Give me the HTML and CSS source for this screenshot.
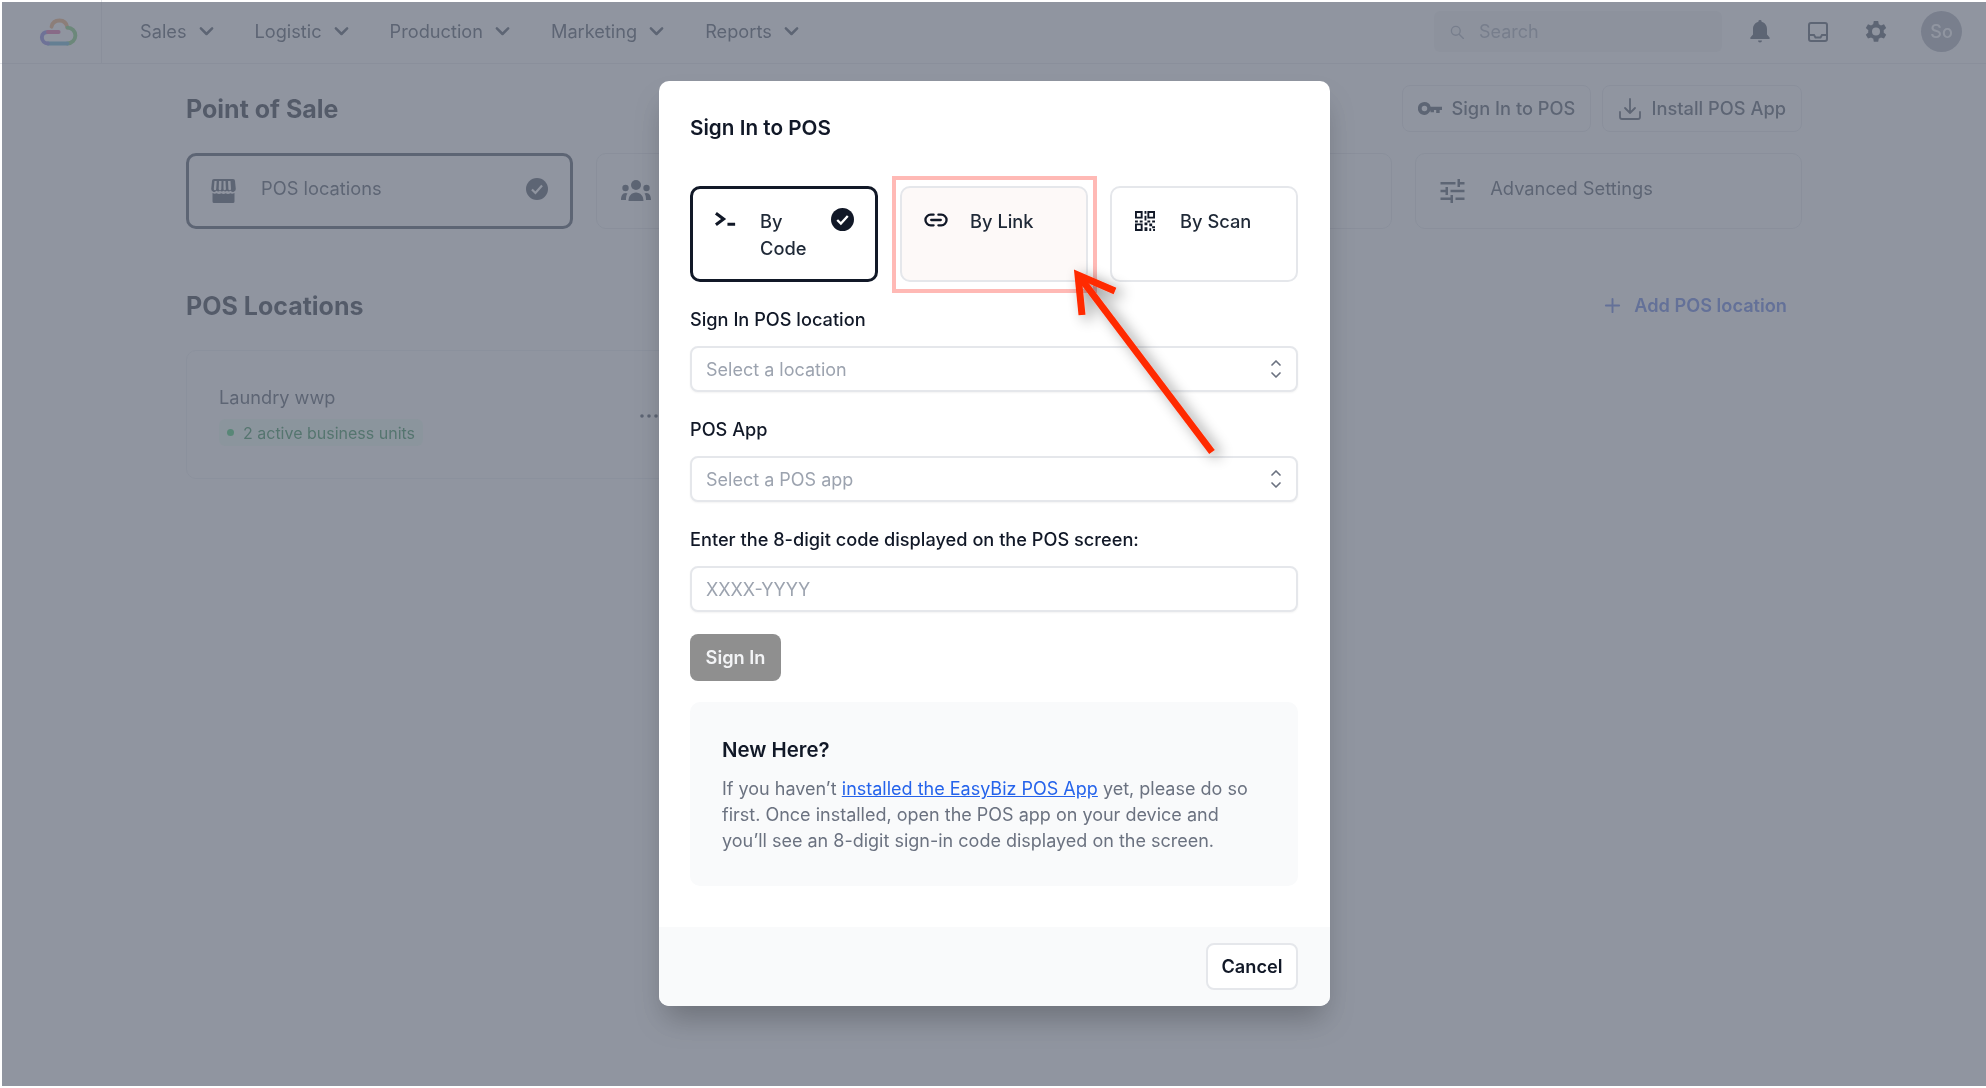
FILE: index.html
```html
<!DOCTYPE html>
<html lang="en">
<head>
  <meta charset="UTF-8">
  <meta name="viewport" content="width=device-width, initial-scale=1.0">
  <title>Point of Sale</title>
  <link rel="stylesheet" href="styles.css">
</head>
<body>
  <div class="page">
    <nav class="topbar">
      <div class="brand">
        <svg class="logo" viewBox="0 0 46 34" fill="none" stroke-width="4.4" stroke-linecap="round">
          <path d="M14 11 C15 6 19 4 23 4 C28 4 31 7 32 12" stroke="#efa463"/>
          <path d="M32 12 C37 12 41 16 41 21 C41 26 37 30 32 30" stroke="#72c96a"/>
          <path d="M32 30 H10" stroke="#4fa7c9"/>
          <path d="M10 30 C6 30 3 27 3 23 C3 19 6 17 10 17" stroke="#7a74dc"/>
          <path d="M10 17 H22" stroke="#e0569a"/>
        </svg>
      </div>
      <ul class="menu">
        <li>Sales <svg class="chev" viewBox="0 0 20 20"><path d="M5.5 7.5 10 12l4.5-4.5"/></svg></li>
        <li>Logistic <svg class="chev" viewBox="0 0 20 20"><path d="M5.5 7.5 10 12l4.5-4.5"/></svg></li>
        <li>Production <svg class="chev" viewBox="0 0 20 20"><path d="M5.5 7.5 10 12l4.5-4.5"/></svg></li>
        <li>Marketing <svg class="chev" viewBox="0 0 20 20"><path d="M5.5 7.5 10 12l4.5-4.5"/></svg></li>
        <li>Reports <svg class="chev" viewBox="0 0 20 20"><path d="M5.5 7.5 10 12l4.5-4.5"/></svg></li>
      </ul>
      <div class="search">
        <svg viewBox="0 0 20 20" fill="none" stroke="currentColor" stroke-width="1.7" stroke-linecap="round"><circle cx="8.5" cy="8.5" r="5.5"/><path d="m13 13 5 5"/></svg>
        <span>Search</span>
      </div>
      <div class="tools">
        <svg class="bell" viewBox="0 0 20 24" fill="currentColor"><path d="M10 0a1.6 1.6 0 0 1 1.6 1.8C15 2.6 17 5.6 17 9v5.6l2.6 3V19H.4v-1.4l2.6-3V9c0-3.4 2-6.4 5.4-7.2A1.6 1.6 0 0 1 10 0ZM8 20.4h4a2 2 0 0 1-4 0Z"/></svg>
        <svg class="inbox" viewBox="0 0 20 20" fill="none" stroke="currentColor" stroke-width="2"><rect x="1" y="1" width="18" height="18" rx="2"/><path d="M1 13h5l1.5 2.5h5L14 13h5"/></svg>
        <svg class="gear" viewBox="0 0 24 24" fill="currentColor"><path fill-rule="evenodd" d="M14.2 1h-4.400l-.6 3.200a8 8 0 0 0-2.100 1.200L4 4.300 1.800 8.100l2.500 2.100a8 8 0 0 0 0 2.400l-2.500 2.100L4 18.500l3.100-1.100a8 8 0 0 0 2.100 1.200l.6 3.200h4.400l.6-3.200a8 8 0 0 0 2.100-1.200l3.100 1.100 2.200-3.800-2.500-2.100a8 8 0 0 0 0-2.400l2.500-2.100L20 4.300l-3.100 1.100a8 8 0 0 0-2.100-1.200L14.200 1ZM12 15.400a4 4 0 1 0 0-8 4 4 0 0 0 0 8Z"/></svg>
        <div class="avatar">So</div>
      </div>
    </nav>

    <main class="content">
      <header class="page-head">
        <h1>Point of Sale</h1>
        <div class="head-actions">
          <button class="btn-outline">
            <svg class="key" viewBox="0 0 26 14" fill="currentColor"><path fill-rule="evenodd" d="M7 0a7 7 0 0 1 6.700 5H26v3.500h-2.500V12h-3.800V8.500h-2.400V11h-3.800V9A7 7 0 1 1 7 0Zm0 4a3 3 0 1 0 0 6 3 3 0 0 0 0-6Z"/></svg>
            Sign In to POS
          </button>
          <button class="btn-outline">
            <svg class="download" viewBox="0 0 24 24" fill="none" stroke="currentColor" stroke-width="1.800" stroke-linecap="round" stroke-linejoin="round"><path d="M2 15v5a2 2 0 0 0 2 2h16a2 2 0 0 0 2-2v-5M12 2v14m-5-5 5 5 5-5"/></svg>
            Install POS App
          </button>
        </div>
      </header>

      <section class="tabs">
        <div class="tab tab-active">
          <svg class="tab-icon" viewBox="0 0 25 24" fill="currentColor"><path fill-rule="evenodd" d="M3 0h19a2 2 0 0 1 2 2l.8 8a3 3 0 0 1-5.300 1.800 3 3 0 0 1-3.500 0 3 3 0 0 1-3.500 0 3 3 0 0 1-3.500 0 3 3 0 0 1-3.500 0 3 3 0 0 1-5.300-1.800L1 2a2 2 0 0 1 2-2Zm.5 2-.7 8a1.200 1.200 0 0 0 2.400 0l.5-8Zm4.500 0-.3 8a1.300 1.300 0 0 0 2.600 0l.2-8Zm4.500 0v8a1.200 1.200 0 0 0 2.400 0l-.4-8Zm4.500 0 .4 8a1.300 1.300 0 0 0 2.600 0L19.500 2Z"/><path d="M1.500 14c1.500 1 3 1 4.200.3 1.400 1 3.200 1 4.600 0 1.400 1 3 1 4.400 0 1.400 1 3.200 1 4.600 0 1.200.7 2.700.7 4.200-.3v8.500a1.500 1.500 0 0 1-1.500 1.500H3A1.500 1.500 0 0 1 1.500 22.500Z"/></svg>
          <span class="tab-label">POS locations</span>
          <svg class="tab-check" viewBox="0 0 24 24"><circle cx="12" cy="12" r="12" fill="currentColor"/><path d="m6.500 12.500 3.800 3.800 7.200-8" fill="none" stroke="#fff" stroke-width="2.400"/></svg>
        </div>
        <div class="tab">
          <svg class="tab-icon people" viewBox="0 0 30 22" fill="currentColor"><circle cx="15" cy="5" r="5"/><circle cx="4.500" cy="8" r="3.200"/><circle cx="25.500" cy="8" r="3.200"/><path d="M7.500 21c0-5 3-8.500 7.500-8.500s7.500 3.500 7.500 8.500ZM0 20c0-4 1.500-7 4.500-7 .8 0 1.500.2 2 .5C5 15.500 5 18 5 20ZM30 20c0-4-1.500-7-4.500-7-.8 0-1.500.2-2 .5 1.500 2 1.500 4.500 1.500 6.500Z"/></svg>
        </div>
        <div class="tab"></div>
        <div class="tab">
          <svg class="tab-icon sliders" viewBox="0 0 24 24" fill="currentColor"><path d="M0 3h15v2.500H0zM17 0h2.500v3H24v2.500h-4.500V8H17zM0 10.700h5V8h2.500v8H5v-2.800H0zM10 10.700h14v2.500H10zM0 18.500h10V16h2.500v8H10v-3H0zM15 18.500h9V21h-9z"/></svg>
          <span class="tab-label">Advanced Settings</span>
        </div>
      </section>

      <section class="locations">
        <div class="section-head">
          <h2>POS Locations</h2>
          <a class="add-link">
            <svg viewBox="0 0 20 20" fill="none" stroke="currentColor" stroke-width="2" stroke-linecap="round"><path d="M10 3v14M3 10h14"/></svg>
            Add POS location
          </a>
        </div>
        <div class="location-grid">
          <div class="location-card">
            <div>
              <div class="location-name">Laundry wwp</div>
              <span class="badge"><i class="dot"></i>2 active business units</span>
            </div>
            <svg class="more" viewBox="0 0 18 4" fill="currentColor"><circle cx="2" cy="2" r="1.800"/><circle cx="9" cy="2" r="1.800"/><circle cx="16" cy="2" r="1.800"/></svg>
          </div>
        </div>
      </section>
    </main>
  </div>

  <div class="overlay">
    <div class="modal">
      <div class="modal-body">
        <h3 class="modal-title">Sign In to POS</h3>

        <div class="methods">
          <div class="method method-active">
            <svg class="method-icon" viewBox="0 0 25 25" fill="none" stroke="currentColor" stroke-width="3.200"><path d="M2 5.500 10 11.500 2 17.500"/><path d="M14 17h8"/></svg>
            <span class="method-label">By Code</span>
            <svg class="method-check" viewBox="0 0 24 24"><circle cx="12" cy="12" r="12" fill="#111827"/><path d="m6.500 12.500 3.800 3.800 7.200-8" fill="none" stroke="#fff" stroke-width="2.400"/></svg>
          </div>
          <div class="method method-marked">
            <svg class="method-icon" viewBox="0 0 25 25" fill="none" stroke="currentColor" stroke-width="2.400" stroke-linecap="round"><path d="M10 7H7a5.500 5.500 0 0 0 0 11h3M15 7h3a5.500 5.500 0 0 1 0 11h-3M7.500 12.500h10"/></svg>
            <span class="method-label">By Link</span>
          </div>
          <div class="method">
            <svg class="method-icon qr" viewBox="0 0 21 21" fill="currentColor"><path fill-rule="evenodd" d="M0 0h8v8H0Zm2 2v4h4V2Zm11-2h8v8h-8Zm2 2v4h4V2ZM0 13h8v8H0Zm2 2v4h4v-4Z"/><path d="M10 0h2v3h-2zM10 5h2v5h-2zM0 10h3v2H0zM5 10h3v2H5zM13 10h3v2h-3zM18 10h3v2h-3zM10 12h3v3h-3zM15 13h3v3h-3zM18 16h3v2h-3zM10 17h3v4h-3zM15 18h2v3h-2zM19 19h2v2h-2z"/></svg>
            <span class="method-label">By Scan</span>
          </div>
        </div>

        <label class="field-label">Sign In POS location</label>
        <button class="select">
          <span>Select a location</span>
          <svg viewBox="0 0 12 20" fill="none" stroke="currentColor" stroke-width="1.700" stroke-linecap="round" stroke-linejoin="round"><path d="m2 6 4-4 4 4M2 14l4 4 4-4"/></svg>
        </button>

        <label class="field-label">POS App</label>
        <button class="select">
          <span>Select a POS app</span>
          <svg viewBox="0 0 12 20" fill="none" stroke="currentColor" stroke-width="1.700" stroke-linecap="round" stroke-linejoin="round"><path d="m2 6 4-4 4 4M2 14l4 4 4-4"/></svg>
        </button>

        <label class="field-label" for="code">Enter the 8-digit code displayed on the POS screen:</label>
        <input class="text-input" id="code" type="text" placeholder="XXXX-YYYY">

        <button class="btn-signin">Sign In</button>

        <div class="info">
          <h4>New Here?</h4>
          <p>If you haven’t <a href="#">installed the EasyBiz POS App</a> yet, please do so first. Once installed, open the POS app on your device and you’ll see an 8-digit sign-in code displayed on the screen.</p>
        </div>
      </div>
      <div class="modal-foot">
        <button class="btn-cancel">Cancel</button>
      </div>
    </div>
  </div>

  <!-- annotation drawn on top of the screenshot -->
  <div class="mark-box"></div>
  <svg class="mark-arrow" viewBox="0 0 1986 1088" fill="none" stroke="#ff2a00" stroke-width="7">
    <defs>
      <filter id="arrowShadow" x="-30%" y="-30%" width="170%" height="170%">
        <feDropShadow dx="6" dy="4" stdDeviation="7" flood-color="#000" flood-opacity="0.45"/>
      </filter>
    </defs>
    <g filter="url(#arrowShadow)">
      <path d="M1212 452 1079 276"/>
      <path d="M1115 291 1078 275 1082 315"/>
    </g>
  </svg>
</body>
</html>
```

FILE: styles.css
```css
* {
  box-sizing: border-box;
}
html, body {
  margin: 0;
  height: 100%;
}
body {
  font-family: Inter, "Noto Sans", sans-serif;
  font-size: 18px;
  line-height: 25px;
  color: #111827;
  background: #fff;
  overflow: hidden;
  filter: blur(0.35px);
}
button {
  font: inherit;
}

/* top navigation */
.topbar {
  height: 64px;
  display: flex;
  align-items: center;
  border-bottom: 1px solid #e5e7eb;
  padding-right: 24px;
}
.brand {
  width: 102px;
  height: 100%;
  border-right: 1px solid #e5e7eb;
  padding-left: 39px;
  display: flex;
  align-items: center;
}
.logo {
  width: 41px;
  height: 30px;
}
.menu {
  list-style: none;
  display: flex;
  gap: 36px;
  margin: 0;
  padding: 0 0 0 38px;
  color: #374151;
  font-size: 18.2px;
}
.menu li {
  display: flex;
  align-items: center;
  gap: 7px;
}
.chev {
  width: 25px;
  height: 25px;
  fill: none;
  stroke: currentColor;
  stroke-width: 2;
  stroke-linecap: round;
  stroke-linejoin: round;
}
.search {
  margin-left: auto;
  width: 288px;
  height: 41px;
  background: #f1f2f4;
  border-radius: 6px;
  display: flex;
  align-items: center;
  gap: 14px;
  padding-left: 15px;
  color: #9ca3af;
}
.search svg {
  width: 16px;
  height: 16px;
}
.tools {
  display: flex;
  align-items: center;
  margin-left: 28px;
  color: #374151;
}
.bell {
  width: 20px;
  height: 24px;
}
.inbox {
  width: 20px;
  height: 20px;
  margin-left: 38px;
}
.gear {
  width: 24px;
  height: 24px;
  margin-left: 36px;
}
.avatar {
  width: 41px;
  height: 41px;
  border-radius: 50%;
  margin-left: 33px;
  background: #a3a8b4;
  color: #fff;
  font-weight: 500;
  display: flex;
  align-items: center;
  justify-content: center;
}

/* page content */
.content {
  padding: 0 184px 0 186px;
}
.page-head {
  display: flex;
  align-items: center;
  justify-content: space-between;
  height: 47px;
  margin-top: 21px;
}
h1, h2 {
  margin: 0;
  font-size: 25px;
  line-height: 32px;
  font-weight: 700;
  color: #111827;
}
.head-actions {
  display: flex;
  gap: 11px;
}
.btn-outline {
  height: 47px;
  padding: 0 15px;
  display: flex;
  align-items: center;
  gap: 9px;
  background: #fff;
  border: 1px solid #e5e7eb;
  border-radius: 8px;
  color: #374151;
  font-size: 18.3px;
  font-weight: 500;
}
.key {
  width: 24px;
  height: 13px;
}
.download {
  width: 24px;
  height: 24px;
}
.tabs {
  display: grid;
  grid-template-columns: repeat(4, 1fr);
  gap: 23px;
  margin-top: 21px;
}
.tab {
  height: 76px;
  display: flex;
  align-items: center;
  padding: 0 24px;
  border: 1px solid #e5e7eb;
  border-radius: 10px;
  color: #374151;
}
.tab-active {
  border: 3px solid #374151;
  padding: 0 22px;
}
.tab-icon {
  width: 25px;
  height: 24px;
  flex: none;
}
.tab-icon.people {
  width: 30px;
  height: 22px;
}
.tab-label {
  margin: 0 0 5px 25px;
  flex: 1;
  font-size: 18.3px;
}
.tab-check {
  width: 22px;
  height: 22px;
  margin-bottom: 4px;
}
.section-head {
  display: flex;
  align-items: center;
  justify-content: space-between;
  margin-top: 61px;
  height: 32px;
  padding-right: 15px;
}
.add-link {
  display: flex;
  align-items: center;
  gap: 12px;
  margin-bottom: 2px;
  color: #4f6fe0;
  font-size: 18.2px;
  font-weight: 600;
}
.add-link svg {
  width: 19px;
  height: 19px;
}
.location-grid {
  display: grid;
  grid-template-columns: repeat(3, 1fr);
  gap: 23px;
  margin-top: 28px;
}
.location-card {
  height: 129px;
  display: flex;
  align-items: center;
  justify-content: space-between;
  padding: 2px 50px 0 32px;
  border: 1px solid #eceef1;
  border-radius: 10px;
}
.location-name {
  color: #374151;
  font-size: 18.2px;
  line-height: 25px;
}
.badge {
  display: inline-flex;
  align-items: center;
  gap: 9px;
  height: 27px;
  margin-top: 9px;
  padding: 0 8px;
  background: #ecfdf3;
  border-radius: 6px;
  color: #15803d;
  font-size: 16px;
  line-height: 20px;
}
.dot {
  width: 7px;
  height: 7px;
  border-radius: 50%;
  background: #22c55e;
}
.more {
  width: 18px;
  height: 4px;
  color: #374151;
}

/* backdrop and dialog */
.overlay {
  position: fixed;
  inset: 2px 0 2px 2px;
  background: rgba(107, 114, 128, 0.75);
  display: flex;
  justify-content: center;
  padding: 79px 0 0 1px;
}
.modal {
  width: 671px;
  height: 925px;
  background: #fff;
  border-radius: 10px;
  overflow: hidden;
  display: flex;
  flex-direction: column;
  box-shadow: 0 18px 30px -6px rgba(0, 0, 0, 0.25);
}
.modal-body {
  flex: 1;
  padding: 0 32px 0 31px;
}
.modal-title {
  margin: 33px 0 0;
  font-size: 20.7px;
  line-height: 28px;
  font-weight: 600;
  color: #111827;
}
.methods {
  display: grid;
  grid-template-columns: repeat(3, 188px);
  gap: 22px;
  margin-top: 44px;
}
.method {
  height: 96px;
  display: flex;
  align-items: flex-start;
  padding: 20px 22px 0;
  border: 2px solid #e5e7eb;
  border-radius: 10px;
  color: #1f2937;
}
.method-active {
  border: 3px solid #111827;
  padding: 19px 21px 0;
}
.method-marked {
  background: #fdf9f8;
}
.method-icon {
  width: 24px;
  height: 24px;
  flex: none;
  color: #111827;
}
.method-icon.qr {
  width: 20px;
  height: 20px;
  margin: 3px 4px 0 1px;
  margin-left: 1px;
  margin-right: 3px;
}
.method-label {
  margin-left: 22px;
  font-size: 18.3px;
  line-height: 26.500px;
  font-weight: 500;
  flex: 1;
}
.method-check {
  width: 23px;
  height: 23px;
  flex: none;
}
.field-label {
  display: block;
  margin-top: 25px;
  font-size: 18.2px;
  font-weight: 500;
  color: #111827;
}
.select,
.text-input {
  display: flex;
  align-items: center;
  justify-content: space-between;
  width: 100%;
  height: 46px;
  margin-top: 14px;
  padding: 0 14px;
  background: #fff;
  border: 2px solid #e5e7eb;
  border-radius: 8px;
  box-shadow: 0 1px 2px rgba(0, 0, 0, 0.05);
  color: #9ca3af;
  font: inherit;
  text-align: left;
}
.select svg {
  width: 12px;
  height: 20px;
  color: #6b7280;
}
.text-input::placeholder {
  color: #9ca3af;
}
.btn-signin {
  display: block;
  height: 47px;
  width: 91px;
  margin-top: 22px;
  background: #8f8f8f;
  color: #f3f4f6;
  border: 0;
  border-radius: 8px;
  font-size: 18.200px;
  font-weight: 600;
}
.info {
  margin-top: 21px;
  height: 184px;
  padding: 34px 32px 0;
  background: #f9fafb;
  border-radius: 10px;
}
.info h4 {
  margin: 0;
  font-size: 20.4px;
  line-height: 28px;
  font-weight: 600;
  color: #111827;
}
.info p {
  margin: 12px 0 0;
  line-height: 26px;
  color: #6b7280;
}
.info a {
  color: #2563eb;
}
.modal-foot {
  height: 79px;
  background: #f9fafb;
  display: flex;
  justify-content: flex-end;
  align-items: flex-start;
  padding: 16px 32px 0;
}
.btn-cancel {
  width: 92px;
  height: 47px;
  background: #fff;
  border: 2px solid #e5e7eb;
  border-radius: 8px;
  color: #111827;
  font-size: 18.2px;
  font-weight: 600;
}

/* red annotation */
.mark-box {
  position: fixed;
  left: 892px;
  top: 176px;
  width: 205px;
  height: 117px;
  border: 4px solid #ffb9b5;
}
.mark-arrow {
  position: fixed;
  left: 0;
  top: 0;
  width: 1986px;
  height: 1088px;
  pointer-events: none;
}
```
